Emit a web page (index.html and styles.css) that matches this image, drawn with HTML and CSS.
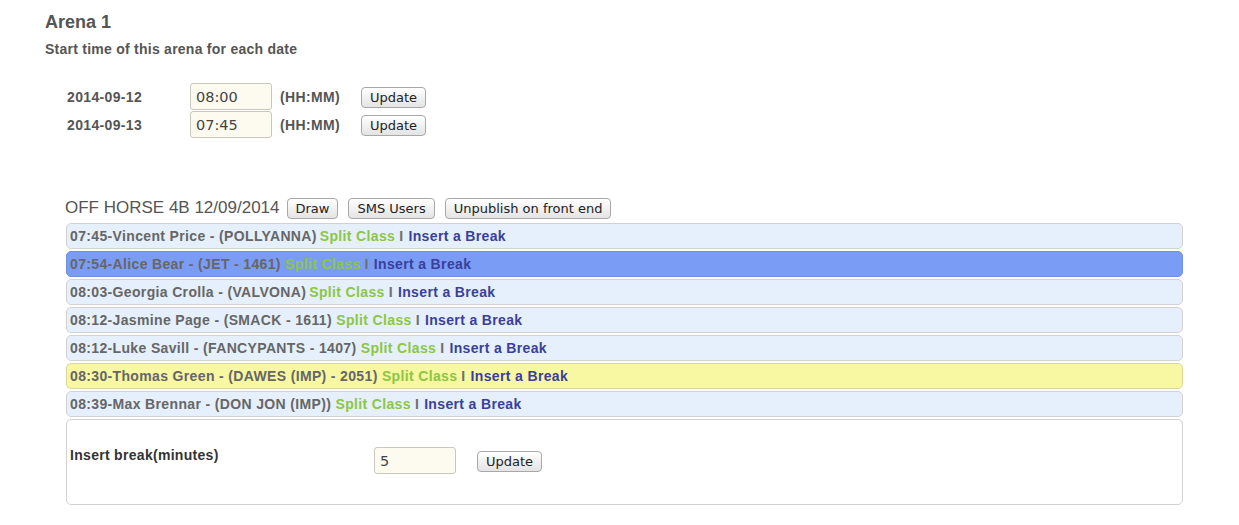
FILE: index.html
```html
<!DOCTYPE html>
<html>
<head>
<meta charset="utf-8">
<link rel="stylesheet" href="styles.css">
</head>
<body>
<div class="page">
  <h1 class="arena-title">Arena 1</h1>
  <h2 class="arena-sub">Start time of this arena for each date</h2>
  <div class="dates">
    <div class="date-row">
      <span class="date-label">2014-09-12</span>
      <input class="time-input" type="text" value="08:00">
      <span class="fmt">(HH:MM)</span>
      <button class="btn">Update</button>
    </div>
    <div class="date-row">
      <span class="date-label">2014-09-13</span>
      <input class="time-input" type="text" value="07:45">
      <span class="fmt">(HH:MM)</span>
      <button class="btn">Update</button>
    </div>
  </div>

  <div class="class-block">
    <div class="class-head">
      <span class="class-name">OFF HORSE 4B 12/09/2014</span>
      <button class="btn">Draw</button>
      <button class="btn">SMS Users</button>
      <button class="btn">Unpublish on front end</button>
    </div>
    <ul class="entries">
      <li class="entry"><span class="who">07:45-Vincent Price - (POLLYANNA)</span><a class="split tight">Split Class</a><span class="sep">I</span><a class="brk">Insert a Break</a></li>
      <li class="entry selected"><span class="who">07:54-Alice Bear - (JET - 1461)</span> <a class="split">Split Class</a><span class="sep">I</span><a class="brk">Insert a Break</a></li>
      <li class="entry"><span class="who">08:03-Georgia Crolla - (VALVONA)</span><a class="split tight">Split Class</a><span class="sep">I</span><a class="brk">Insert a Break</a></li>
      <li class="entry"><span class="who">08:12-Jasmine Page - (SMACK - 1611)</span> <a class="split">Split Class</a><span class="sep">I</span><a class="brk">Insert a Break</a></li>
      <li class="entry"><span class="who">08:12-Luke Savill - (FANCYPANTS - 1407)</span> <a class="split">Split Class</a><span class="sep">I</span><a class="brk">Insert a Break</a></li>
      <li class="entry highlight"><span class="who">08:30-Thomas Green - (DAWES (IMP) - 2051)</span> <a class="split">Split Class</a><span class="sep">I</span><a class="brk">Insert a Break</a></li>
      <li class="entry"><span class="who">08:39-Max Brennar - (DON JON (IMP))</span> <a class="split">Split Class</a><span class="sep">I</span><a class="brk">Insert a Break</a></li>
    </ul>
    <div class="break-box">
      <span class="break-label">Insert break(minutes)</span>
      <input class="time-input break-input" type="text" value="5">
      <button class="btn">Update</button>
    </div>
  </div>
</div>
</body>
</html>
```

FILE: styles.css
```css
* { box-sizing: border-box; }
html, body { margin: 0; padding: 0; background: #fff; }
body {
  font-family: "Liberation Sans", Arial, Helvetica, sans-serif;
  color: #555;
}
.page {
  padding: 11px 0 0 45px;
}
.arena-title {
  margin: 0;
  font-size: 18px;
  line-height: 22px;
  font-weight: bold;
  color: #555;
}
.arena-sub {
  margin: 8px 0 0 0;
  font-size: 14px;
  line-height: 17px;
  font-weight: bold;
  letter-spacing: 0.25px;
  color: #555;
}
.dates {
  margin: 25px 0 0 22px;
  display: flex;
  flex-direction: column;
  gap: 1px;
}
.date-row {
  display: flex;
  align-items: center;
  height: 27px;
}
.date-label {
  width: 123px;
  font-size: 14px;
  font-weight: bold;
  letter-spacing: 0.35px;
  color: #555;
}
.time-input {
  width: 82px;
  height: 27px;
  border: 1px solid #c9c7bf;
  border-radius: 3px;
  background: #fdfaef;
  font-family: "DejaVu Sans", "Liberation Sans", sans-serif;
  font-size: 14.5px;
  color: #444;
  padding: 0 0 0 5px;
  outline: none;
}
.fmt {
  margin-left: 8px;
  width: 81px;
  font-size: 14px;
  font-weight: bold;
  letter-spacing: 0.35px;
  color: #555;
}
.date-row .btn { margin-top: 2px; }
.btn {
  height: 21px;
  padding: 0 8px;
  border: 1px solid #a8a8a8;
  border-radius: 4px;
  background: linear-gradient(#ffffff, #f1f1f1 50%, #e4e4e4);
  font-family: "DejaVu Sans", "Liberation Sans", sans-serif;
  font-size: 13px;
  color: #222;
  line-height: 19px;
}
.class-block {
  margin: 59px 0 0 20px;
  width: 1118px;
}
.class-head {
  display: flex;
  align-items: center;
  gap: 10px;
  height: 22px;
}
.class-name {
  font-size: 17px;
  color: #555;
  margin-right: -3px;
}
.entries {
  list-style: none;
  margin: 4px 0 0 1px;
  padding: 0;
  display: flex;
  flex-direction: column;
  gap: 2px;
}
.entry {
  height: 26px;
  border: 1px solid #d2d2d2;
  border-radius: 5px;
  background: #e5f0fc;
  padding: 1px 0 0 3px;
  font-size: 14px;
  font-weight: bold;
  letter-spacing: 0.35px;
  line-height: 23px;
  color: #666;
  white-space: nowrap;
}
.entry.selected { background: #7a9cf5; border-color: #6e8fe4; }
.entry.highlight { background: #f8f7a2; border-color: #d8d7a0; }
.who { color: #666; }
.split { color: #8cc643; margin-left: 0; }
.split.tight { margin-left: 3px; }
.sep { color: #6f6f6f; margin: 0 5px 0 4px; font-weight: bold; }
.brk { color: #3b3f9a; }
.break-box {
  margin: 2px 0 0 1px;
  height: 86px;
  border: 1px solid #d2d2d2;
  border-radius: 5px;
  background: #fff;
  display: flex;
  align-items: center;
  padding: 0 0 0 3px;
}
.break-label {
  width: 304px;
  font-size: 14px;
  font-weight: bold;
  letter-spacing: 0.3px;
  color: #333;
  margin-top: -14px;
}
.break-input {
  width: 82px;
  margin-top: -3px;
}
.break-box .btn {
  margin-left: 21px;
  margin-top: -1px;
}
```
